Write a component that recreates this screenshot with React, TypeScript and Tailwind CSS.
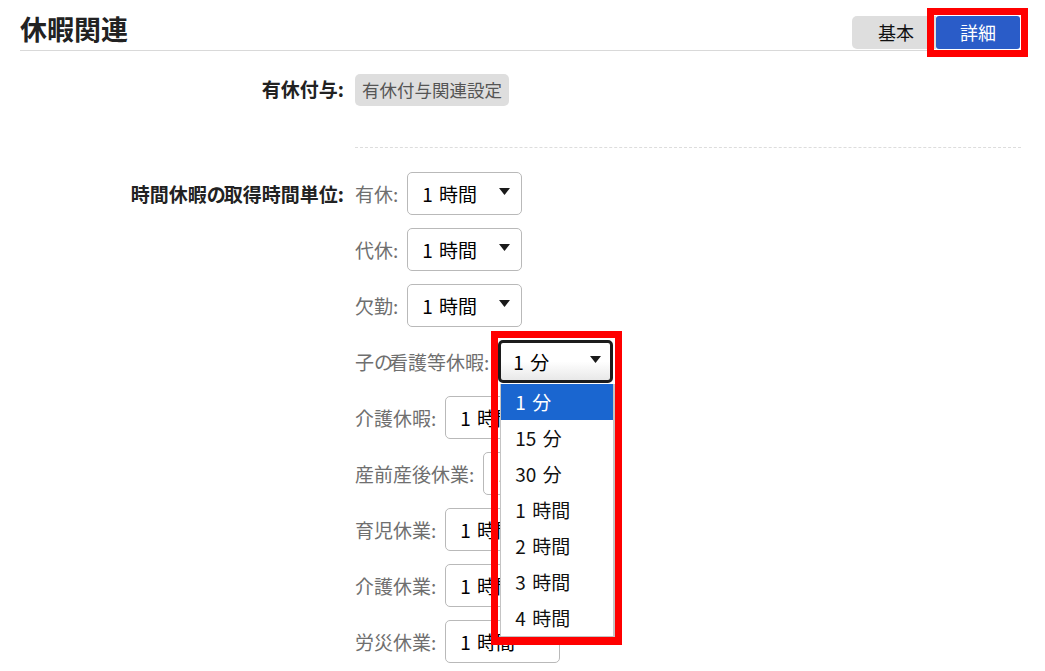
const rows: [string, string, boolean?][] = [
  ["有休:", "1 時間"],
  ["代休:", "1 時間"],
  ["欠勤:", "1 時間"],
  ["子の看護等休暇:", "1 分", true],
  ["介護休暇:", "1 時間"],
  ["産前産後休業:", "1 時間"],
  ["育児休業:", "1 時間"],
  ["介護休業:", "1 時間"],
  ["労災休業:", "1 時間"],
];
const options = ["1 分", "15 分", "30 分", "1 時間", "2 時間", "3 時間", "4 時間"];

function Caret() {
  return (
    <svg width="11" height="7" viewBox="0 0 11 7" className="mb-[4px] shrink-0">
      <path d="M0 0 H11 L5.5 7 Z" fill="#1a1a1a" />
    </svg>
  );
}

function Row({ label, value, focused }: { label: string; value: string; focused?: boolean }) {
  const parts = label.split("の");
  return (
    <div className="flex h-[43px] items-center gap-[9px]">
      <span className="text-[19px] leading-[24px] whitespace-nowrap text-[#6f6f6f]">
        {parts.length > 1 ? (
          <>
            {parts[0]}
            <span className="tracking-[-4px]">の</span>
            {parts[1]}
          </>
        ) : (
          label
        )}
      </span>
      {focused ? (
        <div className="relative">
          <div className="flex h-[43px] w-[115px] items-center justify-between rounded-[5px] border-[3px] border-[#1c1c1c] bg-gradient-to-b from-white via-white to-[#e8e8e8] pr-[9px] pl-[12px] text-[19px] text-black [word-spacing:2px]">
            <span className="pt-[1px]">{value}</span>
            <Caret />
          </div>
          <div className="absolute top-[44px] left-[2px] z-10 w-[115px] border-r-2 border-b-2 border-l border-[#c4c4c4] bg-white">
            {options.map((o, i) => (
              <div
                key={o}
                className={`flex h-[36px] items-center pl-[14px] text-[19px] [word-spacing:2px] ${i === 0 ? "bg-[#1a66d0] text-white" : "text-[#111]"}`}
              >
                {o}
              </div>
            ))}
          </div>
        </div>
      ) : (
        <div className="flex h-[43px] w-[115px] shrink-0 items-center justify-between rounded-[5px] border border-[#b9b9b9] bg-white pr-[11px] pl-[14px] text-[19px] text-black [word-spacing:2px]">
          <span className="pt-[1px]">{value}</span>
          <Caret />
        </div>
      )}
    </div>
  );
}

export default function App() {
  return (
    <div
      className="relative h-[671px] w-[1045px] overflow-hidden bg-white pr-[24px] pl-[20px] text-[#222]"
      style={{ fontFamily: '"Noto Sans CJK JP", "Noto Sans", sans-serif' }}
    >
      <div className="flex h-[51px] items-end justify-between border-b border-[#d9d9d9]">
        <h1 className="mb-[3px] text-[27px] leading-[36px] font-bold text-[#222]">休暇関連</h1>
        <div className="mr-[1px] mb-[1px] flex h-[33px] text-[18px]">
          <div className="flex w-[84px] items-center justify-center rounded-l-[5px] bg-[#dedede] pl-[4px] text-[#111]">基本</div>
          <div className="flex w-[84px] items-center justify-center rounded-[3px] bg-[#2a5cc8] text-white">詳細</div>
        </div>
      </div>

      <div className="flex">
        <div className="w-[324px] pt-[24px] text-right text-[19px] leading-[28px] font-bold text-[#222]">有休付与:</div>
        <div className="ml-[11px] flex-1">
          <div className="mt-[23px] flex h-[74px] items-start border-b border-dashed border-[#dddddd]">
            <div className="flex h-[32px] items-center rounded-[5px] bg-[#dedede] px-[7px] text-[17.5px] text-[#555]">有休付与関連設定</div>
          </div>
        </div>
      </div>

      <div className="mt-[24px] flex">
        <div className="w-[324px] pt-[8px] text-right text-[19px] leading-[28px] font-bold whitespace-nowrap text-[#222]">
          時間休暇<span className="tracking-[-2px]">の</span>取得時間単位:
        </div>
        <div className="ml-[11px] flex flex-col gap-[13px]">
          {rows.map(([l, v, f]) => (
            <Row key={l + v + String(f)} label={l} value={v} focused={f} />
          ))}
        </div>
      </div>

      <div className="pointer-events-none absolute top-[8px] left-[927px] z-20 h-[49px] w-[101px] border-[7px] border-[#ff0000]" />
      <div className="pointer-events-none absolute top-[331px] left-[491px] z-20 h-[314px] w-[131px] border-[7px] border-b-8 border-[#ff0000]" />
    </div>
  );
}
